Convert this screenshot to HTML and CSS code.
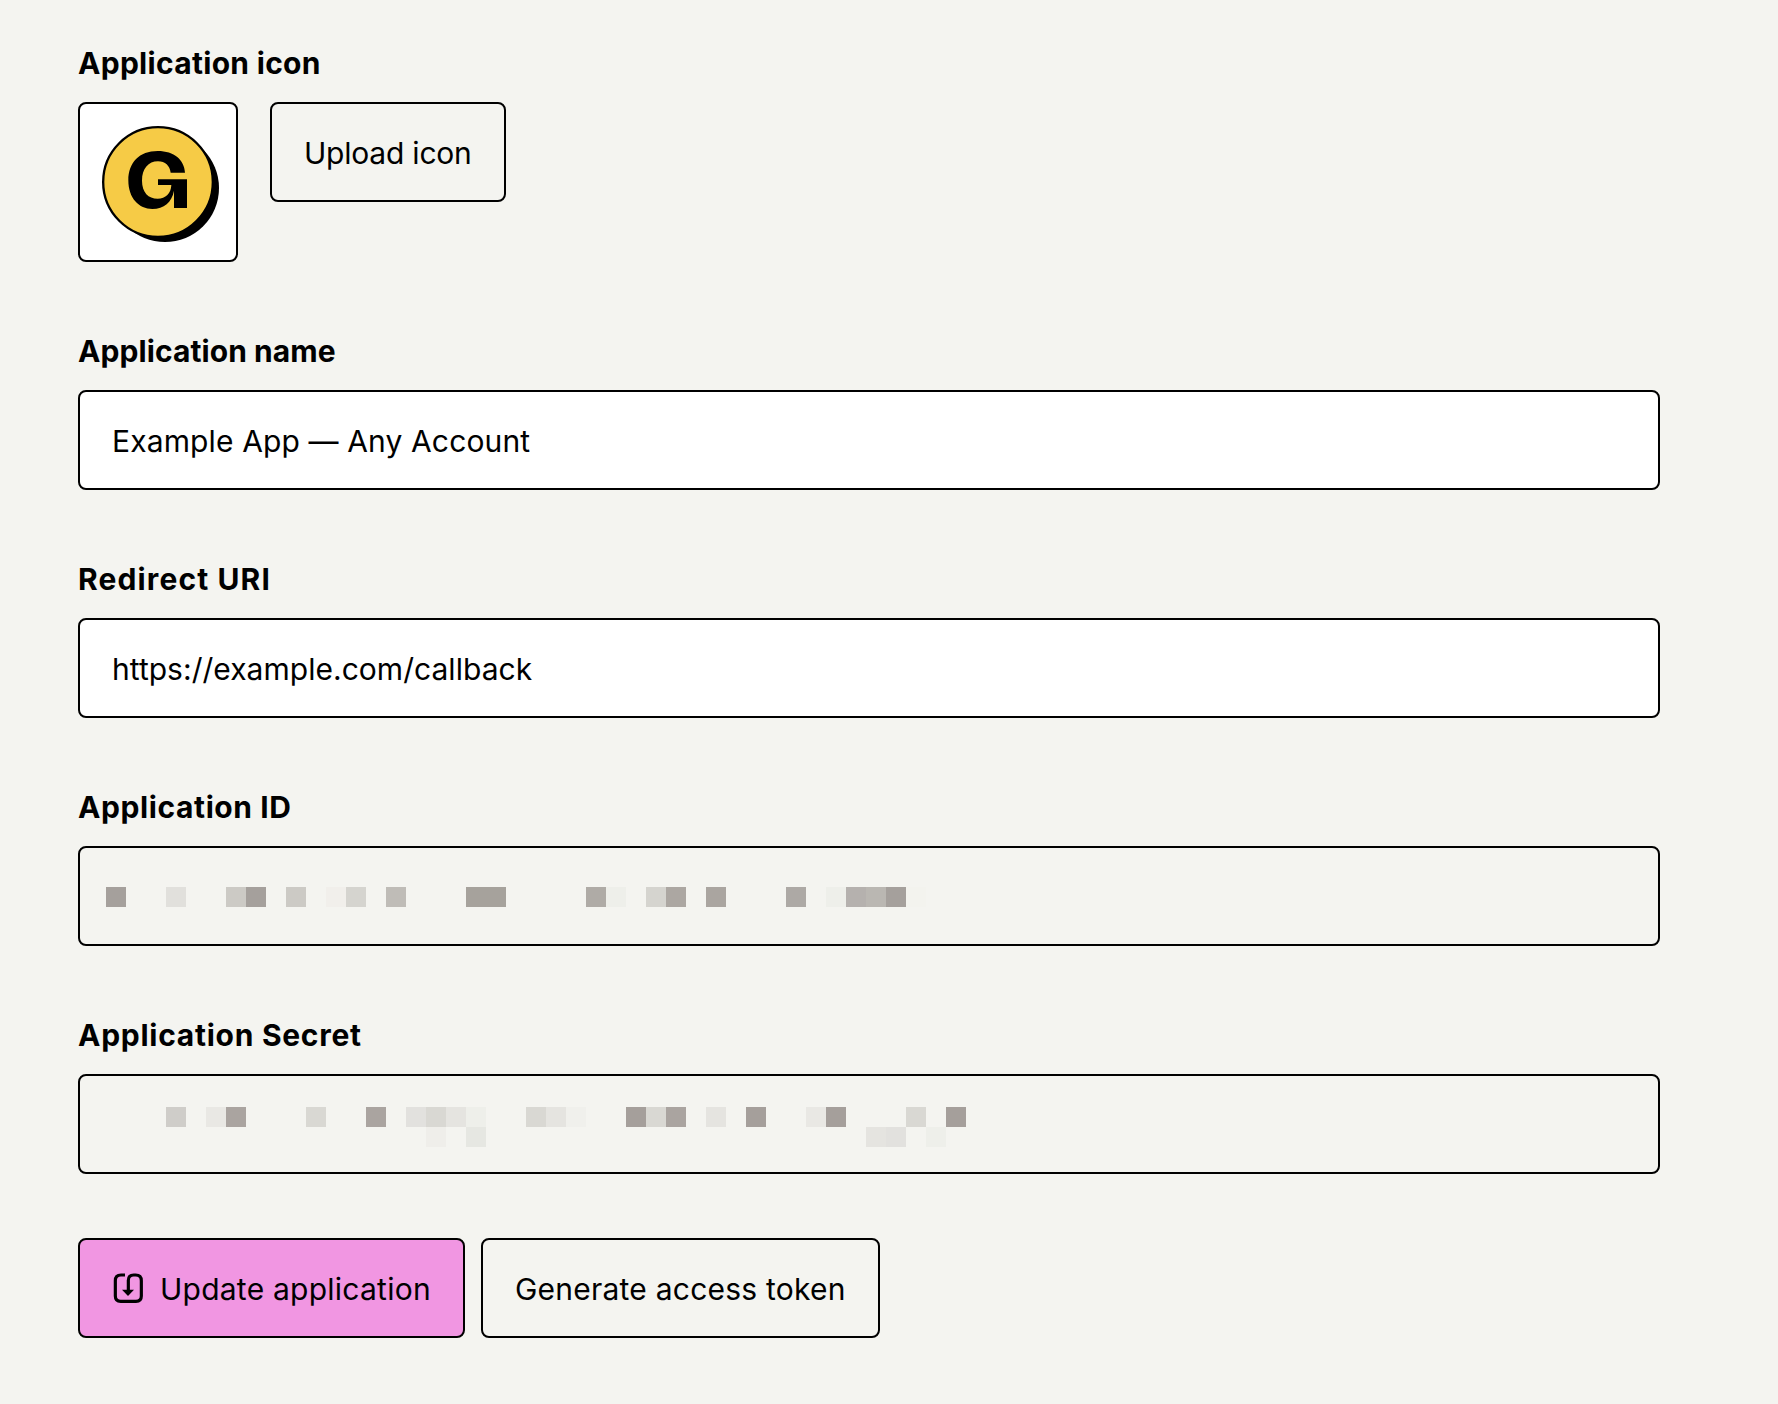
FILE: index.html
```html
<!DOCTYPE html>
<html lang="en">
<head>
<meta charset="utf-8">
<title>Application settings</title>
<link rel="stylesheet" href="styles.css">
</head>
<body>
<form class="form">
  <section class="field">
    <h2 class="label t-icon">Application icon</h2>
    <div class="icon-row">
      <div class="preview">
        <svg viewBox="30 27 468 468" aria-hidden="true">
          <circle cx="285" cy="279" r="162"/>
          <circle cx="264" cy="261" r="164.5" fill="#f6cb46" stroke="#000" stroke-width="7"/>
          <path d="M302 233H345C343 195 313 168 263 168C208 168 175 203 175 256C175 310 207 342 247 342C282 342 305 322 312 287V339H351V253H264V270H304C303 295 287 311 263 311C235 311 216 292 216 257C216 221 235 199 264 199C286 199 299 212 302 233Z"/>
        </svg>
      </div>
      <button type="button" class="button upload"><span class="t-upload">Upload icon</span></button>
    </div>
  </section>
  <section class="field">
    <label class="label t-name" for="name">Application name</label>
    <input class="control v-name" id="name" type="text" value="Example App — Any Account">
  </section>
  <section class="field">
    <label class="label t-uri" for="uri">Redirect URI</label>
    <input class="control v-uri" id="uri" type="text" value="https://example.com/callback">
  </section>
  <section class="field">
    <h2 class="label t-id">Application ID</h2>
    <div class="control masked">
      <svg width="860" height="96" shape-rendering="crispEdges" aria-hidden="true">
        <g transform="translate(0 39)">
          <path fill="#a5a09c" d="M0 0h20v20H0zM140 0h20v20h-20zM780 0h20v20h-20z"/>
          <path fill="#e1e0dc" d="M60 0h20v20H60z"/>
          <path fill="#cccac5" d="M120 0h20v20h-20zM180 0h20v20h-20z"/>
          <path fill="#f1efeb" d="M220 0h20v20h-20z"/>
          <path fill="#d5d4cf" d="M240 0h20v20h-20zM540 0h20v20h-20z"/>
          <path fill="#bfbcb7" d="M280 0h20v20h-20z"/>
          <path fill="#a6a29c" d="M360 0h40v20h-40z"/>
          <path fill="#afaba6" d="M480 0h20v20h-20z"/>
          <path fill="#eeefea" d="M500 0h20v20h-20zM720 0h20v20h-20z"/>
          <path fill="#aca7a2" d="M560 0h20v20h-20z"/>
          <path fill="#aaa5a0" d="M600 0h20v20h-20z"/>
          <path fill="#ada9a5" d="M680 0h20v20h-20z"/>
          <path fill="#b5b1ae" d="M740 0h20v20h-20z"/>
          <path fill="#bab7b2" d="M760 0h20v20h-20z"/>
          <path fill="#f3f3ee" d="M800 0h20v20h-20z"/>
        </g>
      </svg>
    </div>
  </section>
  <section class="field">
    <h2 class="label t-secret">Application Secret</h2>
    <div class="control masked">
      <svg width="880" height="96" shape-rendering="crispEdges" aria-hidden="true">
        <g transform="translate(0 31)">
          <path fill="#cfcdc9" d="M60 0h20v20H60z"/>
          <path fill="#e9e8e4" d="M100 0h20v20h-20zM700 0h20v20h-20z"/>
          <path fill="#aaa4a0" d="M120 0h20v20h-20zM260 0h20v20h-20zM560 0h20v20h-20z"/>
          <path fill="#d9d8d3" d="M200 0h20v20h-20zM320 0h20v20h-20zM420 0h20v20h-20zM540 0h20v20h-20zM800 0h20v20h-20z"/>
          <path fill="#e2e1de" d="M300 0h20v20h-20zM780 20h20v20h-20z"/>
          <path fill="#e5e4e0" d="M340 0h20v20h-20zM440 0h20v20h-20zM600 0h20v20h-20zM760 20h20v20h-20z"/>
          <path fill="#eeefea" d="M360 0h20v20h-20zM820 20h20v20h-20z"/>
          <path fill="#efeeea" d="M320 20h20v20h-20z"/>
          <path fill="#e6e7e2" d="M360 20h20v20h-20z"/>
          <path fill="#f0f0ec" d="M460 0h20v20h-20z"/>
          <path fill="#a59f9b" d="M520 0h20v20h-20zM640 0h20v20h-20zM720 0h20v20h-20zM840 0h20v20h-20z"/>
        </g>
      </svg>
    </div>
  </section>
  <div class="actions">
    <button type="submit" class="button update">
      <svg class="save" viewBox="126 142 96 96" aria-hidden="true">
        <path d="M165 151H153Q136 151 136 168V214Q136 230 152 230H198Q214 230 214 214V168Q214 151 197 151H191Q175 151 175 167V198" fill="none" stroke="#000" stroke-width="9.5"/>
        <path d="M156 195H192L174 214Z"/>
      </svg>
      <span class="t-update">Update application</span>
    </button>
    <button type="button" class="button generate"><span class="t-generate">Generate access token</span></button>
  </div>
</form>
</body>
</html>
```
FILE: styles.css
```css
* {
  box-sizing: border-box;
}

body {
  margin: 0;
  background: #f4f4f0;
  color: #000;
  font: 400 30px/40px Inter, "Liberation Sans", sans-serif;
}

.form {
  width: 1660px;
  padding: 43px 0 66px 78px;
}

.field {
  margin-bottom: 69px;
}

.label {
  display: block;
  height: 40px;
  margin: 0 0 19px;
  font-size: 30px;
  font-weight: 700;
  line-height: 40px;
  white-space: nowrap;
}

.icon-row {
  display: flex;
  align-items: flex-start;
  gap: 32px;
}

.preview {
  width: 160px;
  height: 160px;
  overflow: hidden;
  border: 2px solid #000;
  border-radius: 8px;
  background: #fff;
}

.preview svg,
.masked svg,
.save {
  display: block;
}

.control {
  display: block;
  width: 100%;
  height: 100px;
  padding: 2px 32px 0;
  border: 2px solid #000;
  border-radius: 8px;
  background: #fff;
  color: #000;
  font: inherit;
}

.masked {
  padding: 0 26px;
  background: transparent;
}

.button {
  display: flex;
  align-items: center;
  gap: 16px;
  height: 100px;
  padding: 0 32px;
  border: 2px solid #000;
  border-radius: 8px;
  background: transparent;
  color: #000;
  font: inherit;
  white-space: nowrap;
}

.button span {
  padding-top: 2px;
}

.upload {
  width: 236px;
}

.update {
  width: 387px;
  background: #f196e2;
}

.generate {
  width: 399px;
}

.save {
  flex: none;
  width: 32px;
  height: 32px;
}

.actions {
  display: flex;
  gap: 16px;
  margin-top: -5px;
}

/* Optical tracking per string */
.t-icon { letter-spacing: 0.3px; }
.t-name { letter-spacing: 0.08px; }
.t-uri { letter-spacing: 1.13px; }
.t-id { letter-spacing: 0.6px; }
.t-secret { letter-spacing: 0.73px; }
.t-upload { letter-spacing: -0.22px; }
.t-update { letter-spacing: 0.24px; }
.t-generate { letter-spacing: 0.23px; }
.v-name { letter-spacing: 0.13px; }
.v-uri { letter-spacing: 0.03px; }
```
